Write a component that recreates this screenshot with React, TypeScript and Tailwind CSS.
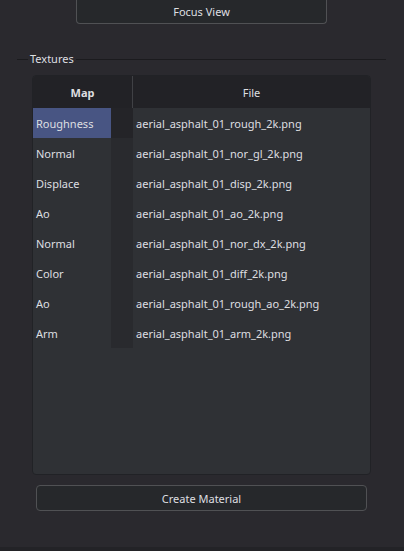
const textures = [
  { map: "Roughness", file: "aerial_asphalt_01_rough_2k.png" },
  { map: "Normal", file: "aerial_asphalt_01_nor_gl_2k.png" },
  { map: "Displace", file: "aerial_asphalt_01_disp_2k.png" },
  { map: "Ao", file: "aerial_asphalt_01_ao_2k.png" },
  { map: "Normal", file: "aerial_asphalt_01_nor_dx_2k.png" },
  { map: "Color", file: "aerial_asphalt_01_diff_2k.png" },
  { map: "Ao", file: "aerial_asphalt_01_rough_ao_2k.png" },
  { map: "Arm", file: "aerial_asphalt_01_arm_2k.png" },
];

const selectedRow = 0;

function TextureTable() {
  return (
    <div className="h-[400px] overflow-hidden rounded border border-[#212226] bg-[#2f3135]">
      <table className="w-full table-fixed border-separate border-spacing-0 text-left">
        <colgroup>
          <col className="w-[78px]" />
          <col className="w-[22px]" />
          <col />
        </colgroup>
        <thead className="bg-[#222226] text-center">
          <tr className="h-8">
            <th scope="col" colSpan={2} className="border-r border-[#404145] p-0 pt-0.5 font-bold">
              Map
            </th>
            <th scope="col" className="p-0 pt-0.5 font-normal">
              File
            </th>
          </tr>
        </thead>
        <tbody>
          {textures.map((texture, index) => {
            const selected = index === selectedRow;
            return (
              <tr key={texture.file} className="h-[30px]" aria-selected={selected}>
                <td className={selected ? "bg-[#485583] p-0 pt-0.5 pl-[3px]" : "p-0 pt-0.5 pl-[3px]"}>
                  {texture.map}
                </td>
                <td className={selected ? "bg-[#242428] p-0" : "bg-[#292a2e] p-0"} />
                <td className="p-0 pt-0.5 pl-[3px]">{texture.file}</td>
              </tr>
            );
          })}
        </tbody>
      </table>
    </div>
  );
}

export default function App() {
  return (
    <main className="flex min-h-screen flex-col border-b-4 border-[#232327] bg-[#2a292e] font-['Noto_Sans',sans-serif] text-[11px] leading-4 text-[#dedfe1]">
      <button
        type="button"
        className="mr-[77px] ml-[76px] h-6 rounded-b border border-t-0 border-[#505154] bg-[#26282b]"
      >
        Focus View
      </button>
      <fieldset className="mr-[18px] ml-[17px] mt-[27px] min-w-0 border-t border-[#1b1b1e]">
        <legend className="ml-[11px] px-0.5">Textures</legend>
        <div className="mx-[15px] mt-2 flex flex-col gap-2.5">
          <TextureTable />
          <button type="button" className="mx-1 h-[26px] rounded border border-[#505154] bg-[#26282b] pt-0.5">
            Create Material
          </button>
        </div>
      </fieldset>
    </main>
  );
}
